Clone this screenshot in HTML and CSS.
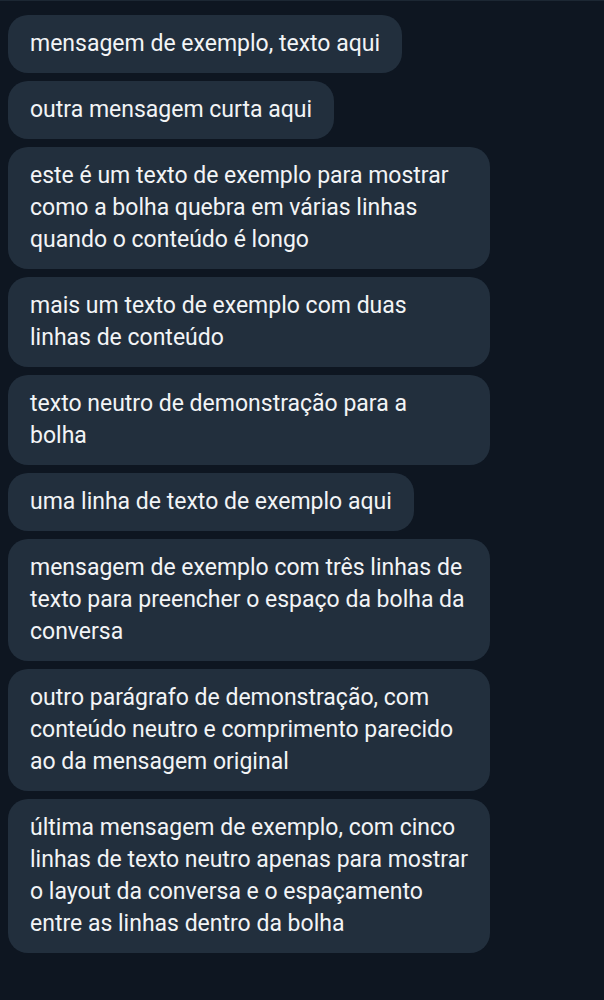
FILE: index.html
```html
<!DOCTYPE html>
<html lang="pt">
<head>
<meta charset="utf-8">
<link rel="stylesheet" href="styles.css">
</head>
<body>
<div class="chat">
  <div class="msg">mensagem de exemplo, texto aqui</div>
  <div class="msg">outra mensagem curta aqui</div>
  <div class="msg">este é um texto de exemplo para mostrar como a bolha quebra em várias linhas quando o conteúdo é longo</div>
  <div class="msg">mais um texto de exemplo com duas linhas de conteúdo</div>
  <div class="msg">texto neutro de demonstração para a bolha</div>
  <div class="msg">uma linha de texto de exemplo aqui</div>
  <div class="msg">mensagem de exemplo com três linhas de texto para preencher o espaço da bolha da conversa</div>
  <div class="msg">outro parágrafo de demonstração, com conteúdo neutro e comprimento parecido ao da mensagem original</div>
  <div class="msg">última mensagem de exemplo, com cinco linhas de texto neutro apenas para mostrar o layout da conversa e o espaçamento entre as linhas dentro da bolha</div>
</div>
</body>
</html>
```

FILE: styles.css
```css
html, body {
  margin: 0;
  padding: 0;
  background: #0e1621;
}
body {
  border-top: 1px solid #1c2733;
  font-family: Roboto, "Noto Sans", "Liberation Sans", sans-serif;
}
.chat {
  display: flex;
  flex-direction: column;
  align-items: flex-start;
  gap: 8px;
  padding: 14px 8px 8px 8px;
}
.msg {
  background: #222f3d;
  color: #f2f4f6;
  font-size: 23px;
  line-height: 32px;
  padding: 13px 22px;
  border-radius: 20px;
  max-width: 438px;
}
```
